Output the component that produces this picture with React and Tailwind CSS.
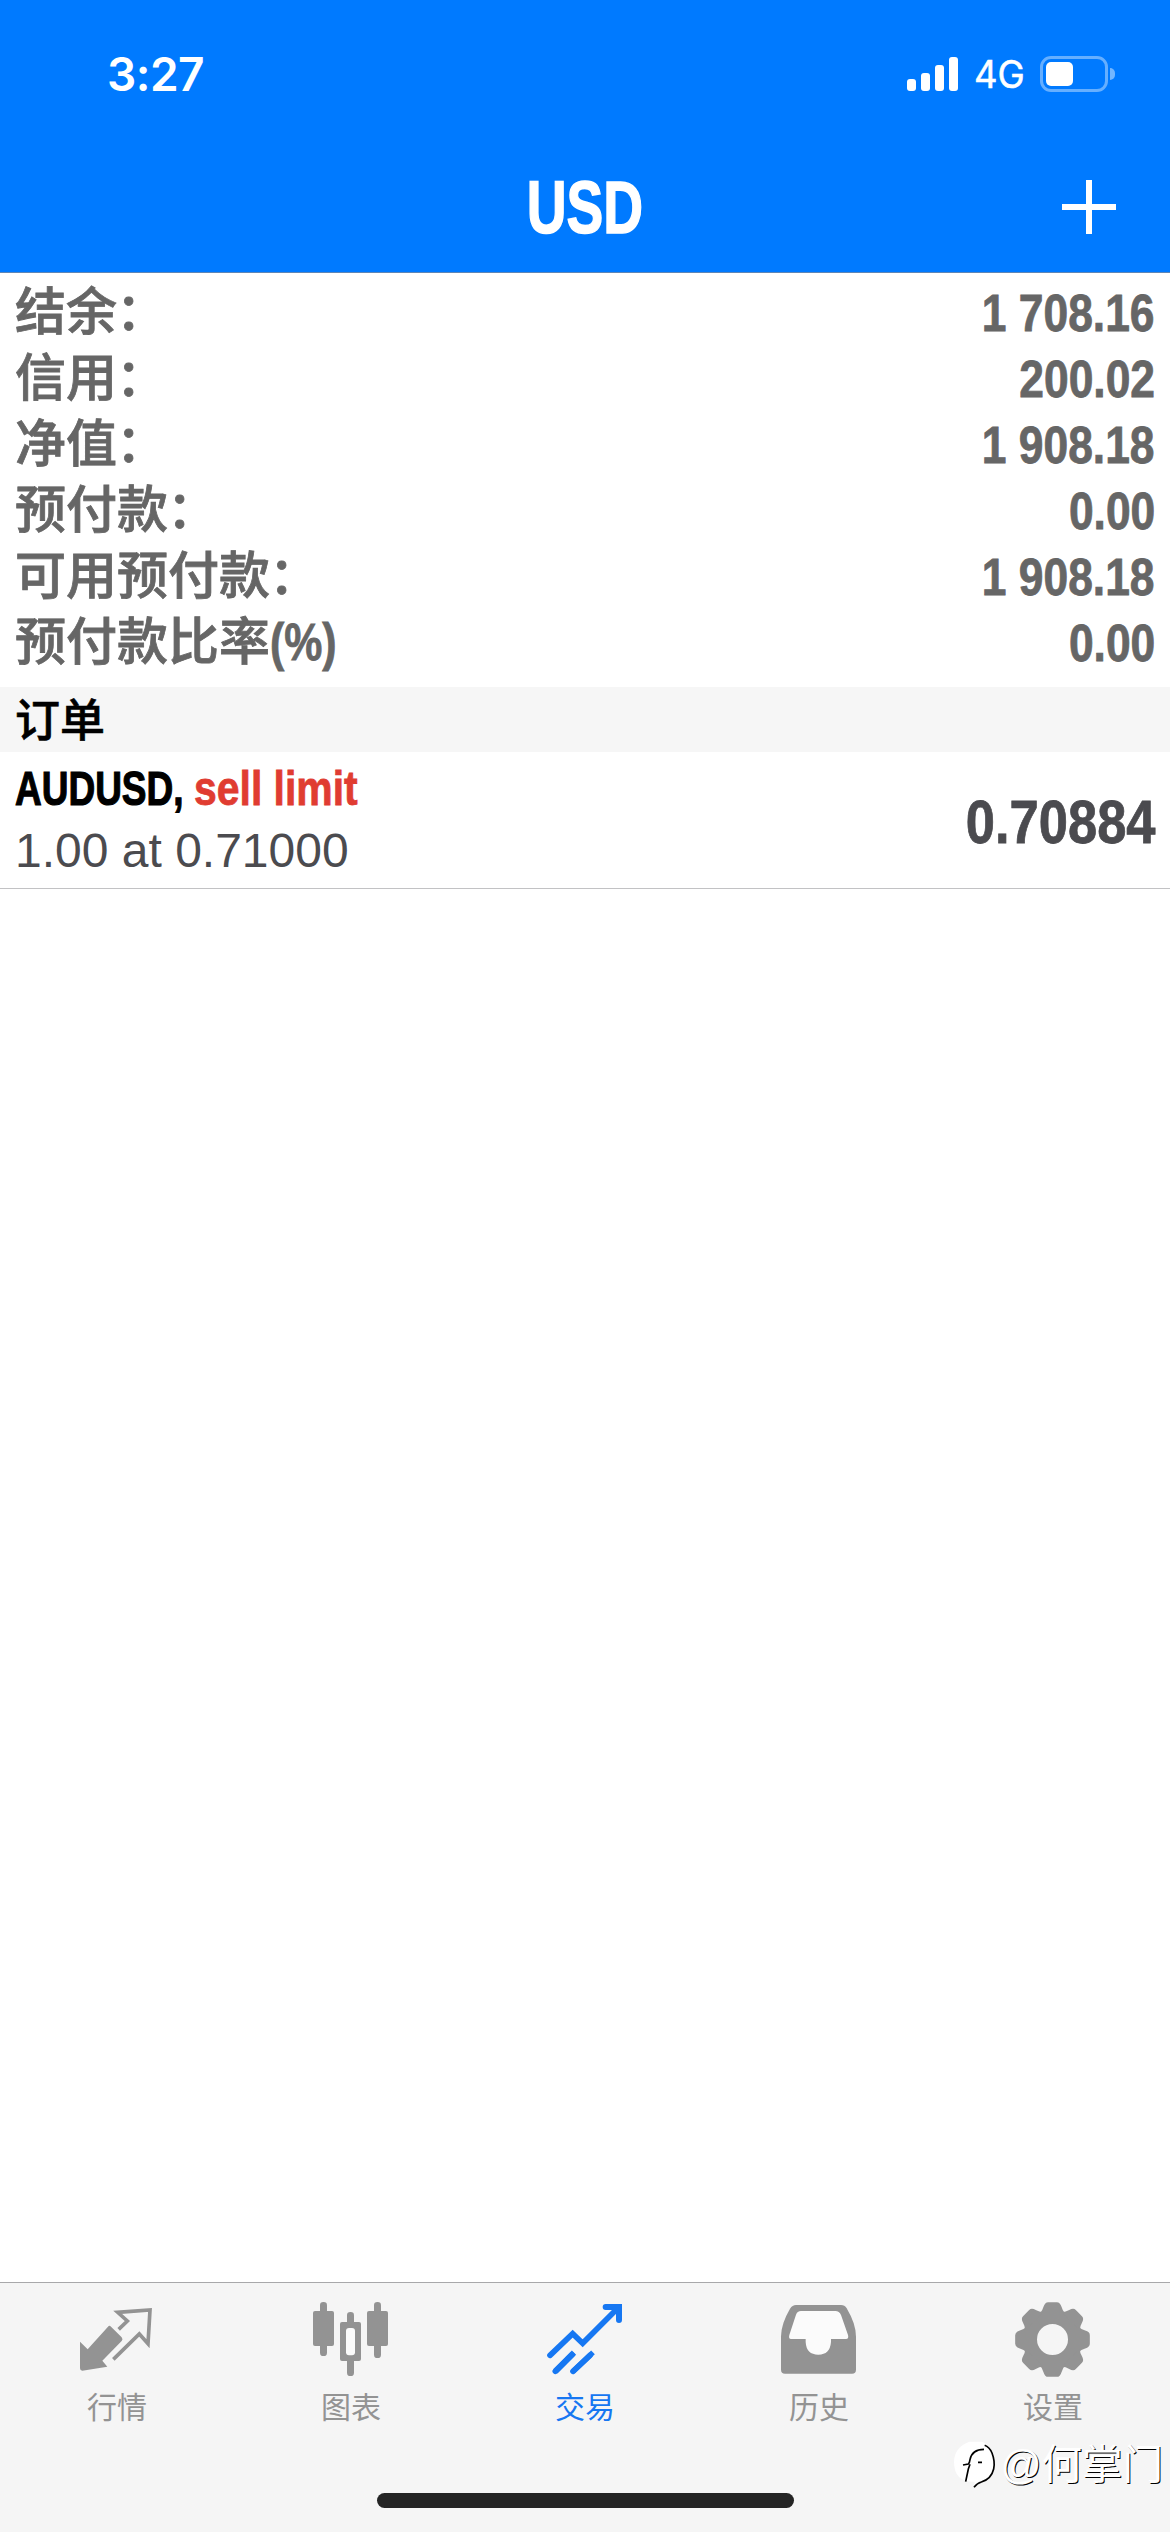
import React from "react";

const HELV = "font-['Liberation_Sans','Noto_Sans_CJK_SC',sans-serif]";

const summary = [
  { label: "结余", colon: true, value: "1 708.16" },
  { label: "信用", colon: true, value: "200.02" },
  { label: "净值", colon: true, value: "1 908.18" },
  { label: "预付款", colon: true, value: "0.00" },
  { label: "可用预付款", colon: true, value: "1 908.18" },
  { label: "预付款比率", suffix: "(%)", value: "0.00" },
];

function SignalBars() {
  return (
    <div className="flex h-[34px] items-end gap-[5px]">
      <div className="h-[12px] w-[9px] rounded-[3px] bg-white" />
      <div className="h-[18px] w-[9px] rounded-[3px] bg-white" />
      <div className="h-[26px] w-[9px] rounded-[3px] bg-white" />
      <div className="h-[34px] w-[9px] rounded-[3px] bg-white" />
    </div>
  );
}

function Battery() {
  return (
    <div className="flex items-center gap-[2px]">
      <div className="h-[36px] w-[68px] rounded-[11px] border-[3px] border-white/40 p-[3px]">
        <div className="h-[24px] w-[27px] rounded-[5px] bg-white" />
      </div>
      <div className="h-[12px] w-[5px] rounded-r-full bg-white/45" />
    </div>
  );
}

function QuotesIcon() {
  return (
    <svg className="h-[80px] w-[84px]" viewBox="75 90 252 240">
      <path
        d="M90 215L113 238L174 170Q178 165 183 170L215 202Q220 208 215 213L157 272L172 290L97 302Q90 302 90 295Z"
        fill="currentColor"
      />
      <path
        d="M206 178L232 153L203 127L300 120L294 221L268 192L190 268"
        fill="none"
        stroke="currentColor"
        strokeWidth="11"
      />
    </svg>
  );
}

function ChartIcon() {
  return (
    <svg className="h-[80px] w-[84px]" viewBox="777 90 252 240" fill="currentColor">
      <rect x="789" y="123" width="63" height="105" rx="6" />
      <rect x="810" y="96" width="21" height="162" rx="10" />
      <rect x="951" y="123" width="63" height="105" rx="6" />
      <rect x="972" y="96" width="21" height="168" rx="10" />
      <rect x="891" y="126" width="21" height="192" rx="10" />
      <rect x="870" y="156" width="63" height="117" rx="6" />
      <rect x="888" y="174" width="27" height="82" rx="9" fill="#fbfbfb" />
    </svg>
  );
}

function TradeIcon() {
  return (
    <svg
      className="h-[80px] w-[84px]"
      viewBox="129 90 252 240"
      fill="none"
      stroke="currentColor"
      strokeWidth="17"
      strokeLinecap="round"
    >
      <path d="M150 256L218 191L248 220L350 118" />
      <path d="M317 111H357V150" strokeWidth="18" />
      <path d="M166 304L222 248" strokeWidth="18" strokeLinecap="butt" />
      <path d="M166 304L216 254M219 304L270 256" strokeWidth="17" />
      <path d="M219 304L279 247" strokeWidth="16" strokeLinecap="butt" />
    </svg>
  );
}

function HistoryIcon() {
  return (
    <svg className="h-[80px] w-[84px]" viewBox="831 90 252 240">
      <path
        d="M888 105H1023Q1034 105 1040 115Q1068 162 1068 200V299Q1068 311 1056 311H855Q843 311 843 299V200Q843 162 870 116Q877 105 888 105Z"
        fill="currentColor"
      />
      <path
        d="M903 123H1006Q1018 123 1023 135L1044 195Q1047 207 1038 207H993V216Q990 254 955 254Q919 254 917 216V207H873Q865 207 868 195L888 134Q892 123 903 123Z"
        fill="#fbfbfb"
      />
    </svg>
  );
}

function SettingsIcon() {
  return (
    <svg className="h-[80px] w-[84px]" viewBox="243 90 252 240">
      <g transform="translate(367.5 208.5)">
        <circle r="67" fill="none" stroke="currentColor" strokeWidth="41" />
        {[0, 45, 90, 135, 180, 225, 270, 315].map((a) => (
          <path
            key={a}
            transform={`rotate(${a})`}
            d="M-38 -78Q-30 -86 -27 -98Q-23 -112 -13 -112H13Q23 -112 27 -98Q30 -86 38 -78Z"
            fill="currentColor"
          />
        ))}
      </g>
    </svg>
  );
}

const tabs = [
  { label: "行情", Icon: QuotesIcon },
  { label: "图表", Icon: ChartIcon },
  { label: "交易", Icon: TradeIcon, active: true },
  { label: "历史", Icon: HistoryIcon },
  { label: "设置", Icon: SettingsIcon },
];

function Watermark() {
  return (
    <div className="absolute right-[7px] bottom-[42px] flex items-center gap-[3px]">
      <svg className="h-[50px] w-[44px]" viewBox="63 525 132 150">
        <path d="M112 530H150Q188 545 187 598Q184 640 140 652L126 668L128 650Q66 652 66 590Q68 545 112 530Z" fill="#fff" />
        <path
          d="M158 541Q172 546 180 564Q190 590 185 612Q178 642 148 651Q136 654 126 667"
          fill="none"
          stroke="#000"
          strokeWidth="5"
        />
        <path
          d="M93 600L109 597Q113 593 114 584Q120 553 156 553M114 598L109 612L101 650M138 592H150"
          fill="none"
          stroke="#000"
          strokeWidth="5"
        />
      </svg>
      <span className="text-[40.5px] leading-[50px] whitespace-nowrap text-white [text-shadow:1px_1px_0.5px_#000]">
        @何掌门
      </span>
    </div>
  );
}

export default function App() {
  return (
    <div className={`flex h-[2532px] w-[1170px] flex-col overflow-hidden bg-white ${HELV}`}>
      <header className="h-[273px] shrink-0 border-b border-[#5f86b5] bg-[#007aff] text-white">
        <div className="flex h-[148px] items-center justify-between pr-[55px] pl-[107px] font-['Inter',sans-serif]">
          <span className="text-[46px] leading-none font-semibold tracking-[-0.5px]">3:27</span>
          <div className="flex items-center">
            <SignalBars />
            <span className="ml-[16px] w-[66px] origin-left scale-x-[0.96] text-[38px] leading-none [-webkit-text-stroke:0.5px_white]">
              4G
            </span>
            <Battery />
          </div>
        </div>
        <div className="grid h-[119px] grid-cols-3 items-center">
          <span />
          <h1 className="origin-center scale-x-[0.735] text-center text-[75px] leading-none font-bold [-webkit-text-stroke:1.5px_white]">
            USD
          </h1>
          <svg className="mr-[54px] mb-[2px] h-[54px] w-[54px] justify-self-end" viewBox="0 0 54 54">
            <path d="M27 0V54M0 27H54" stroke="#fff" strokeWidth="6" />
          </svg>
        </div>
      </header>

      <section className="flex shrink-0 flex-col px-[15px] pt-[6px] pb-[12px] text-[51px] text-[#666]">
        {summary.map((row) => (
          <div key={row.label} className="flex h-[66px] items-center justify-between">
            <span className="flex items-center pt-[2px] leading-[60px] font-medium [-webkit-text-stroke:0.8px_#666]">
              {row.label}
              {row.colon && <span className="relative top-0 -left-px">：</span>}
              {row.suffix && <span className="origin-left scale-x-[0.84] font-bold">{row.suffix}</span>}
            </span>
            <span className="origin-right scale-x-[0.87] pt-[3px] leading-[60px] font-bold [-webkit-text-stroke:0.8px_#666]">
              {row.value}
            </span>
          </div>
        ))}
      </section>

      <h2 className="h-[65px] shrink-0 bg-[#f6f6f6] pl-[15px] font-['Noto_Sans_CJK_SC',sans-serif] text-[45px] leading-[62px] font-medium text-black [-webkit-text-stroke:0.6px_black]">
        订单
      </h2>

      <section className="flex h-[137px] shrink-0 items-center justify-between border-b border-[#c2c2c4] px-[15px]">
        <div className="flex flex-col">
          <div className="flex h-[62px] items-center text-[49px] leading-[56px] font-bold whitespace-nowrap">
            <span className="w-[179px] origin-left scale-x-[0.755] text-black [-webkit-text-stroke:1.2px_black]">AUDUSD,</span>
            <span className="origin-left scale-x-[0.835] text-[#e03c31] [-webkit-text-stroke:0.8px_#e03c31]">sell limit</span>
          </div>
          <div className="flex h-[65px] items-center text-[48px] leading-[56px] text-[#4b4b4f]">1.00 at 0.71000</div>
        </div>
        <span className="origin-right scale-x-[0.86] pt-[5px] text-[61px] font-bold text-[#4b4b4f] [-webkit-text-stroke:0.8px_#4b4b4f]">
          0.70884
        </span>
      </section>

      <main className="flex-1" />

      <footer className="relative h-[250px] shrink-0 border-t border-[#a8a8aa] bg-[#f5f5f5]">
        <nav className="grid grid-cols-5 pt-[17px]">
          {tabs.map(({ label, Icon, active }) => (
            <div
              key={label}
              className={`flex flex-col items-center ${active ? "text-[#1677f2]" : "text-[#939393]"}`}
            >
              <Icon />
              <span className="mt-[5px] font-['Noto_Sans_CJK_SC',sans-serif] text-[30px] leading-[40px]">{label}</span>
            </div>
          ))}
        </nav>
        <Watermark />
        <div className="mx-auto mt-[68px] h-[15px] w-[417px] rounded-full bg-[#242424]" />
      </footer>
    </div>
  );
}
